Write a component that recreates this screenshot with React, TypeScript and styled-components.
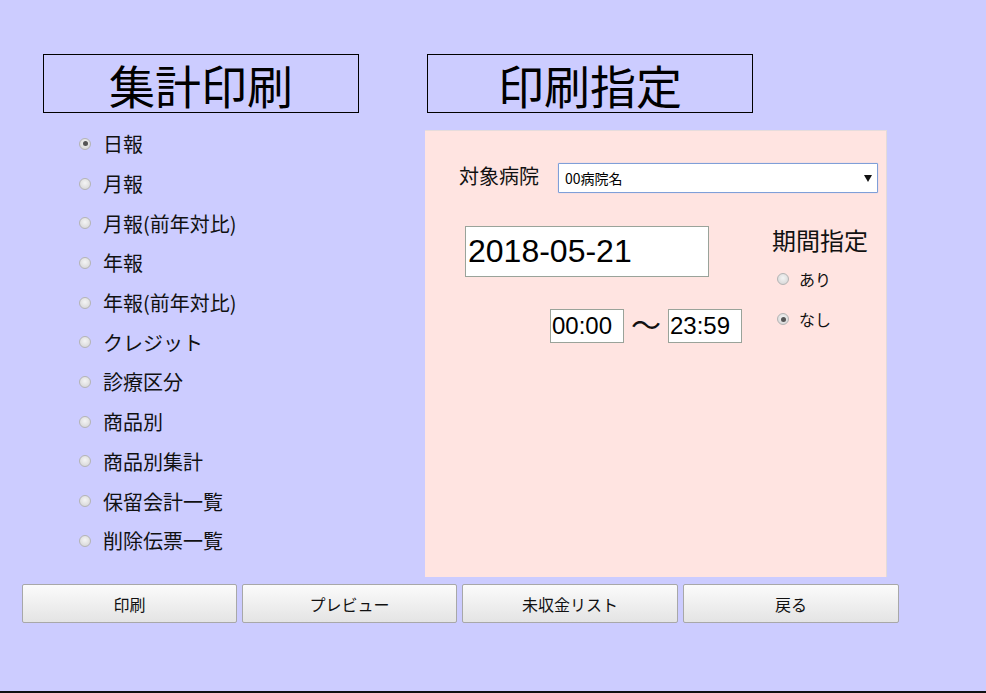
import React, { useState } from "react";
import styled, { createGlobalStyle } from "styled-components";

const GlobalStyle = createGlobalStyle`
  html, body { margin: 0; padding: 0; }
  body {
    background: #ccccff;
    font-family: "Noto Sans CJK JP", "Noto Sans", sans-serif;
    color: #111;
  }
  * { box-sizing: border-box; }
`;

const Page = styled.div`
  width: 986px;
  height: 693px;
  display: flex;
  flex-direction: column;
  overflow: hidden;
`;

const Main = styled.div`
  flex: 1;
  padding: 54px 0 0 22px;
  display: flex;
  flex-direction: column;
`;

const Columns = styled.div`
  display: flex;
  align-items: flex-start;
`;

const LeftCol = styled.div`
  margin-left: 21px;
  width: 316px;
  display: flex;
  flex-direction: column;
`;

const RightCol = styled.div`
  margin-left: 66px;
  width: 462px;
  display: flex;
  flex-direction: column;
`;

const TitleBox = styled.div<{ $w: number; $ml?: number }>`
  width: ${(p) => p.$w}px;
  height: 59px;
  margin-left: ${(p) => p.$ml ?? 0}px;
  border: 1px solid #000;
  display: flex;
  align-items: center;
  justify-content: center;
  font-size: 46px;
  line-height: 1;
  color: #000;
`;

const RadioList = styled.div`
  margin-top: 11px;
  margin-left: 36px;
  display: flex;
  flex-direction: column;
`;

const RadioRow = styled.label<{ $h?: number; $fs?: number; $gap?: number }>`
  height: ${(p) => p.$h ?? 39.7}px;
  display: flex;
  align-items: center;
  gap: ${(p) => p.$gap ?? 12}px;
  font-size: ${(p) => p.$fs ?? 20}px;
  color: #111;
  cursor: pointer;
`;

const Radio = styled.input.attrs({ type: "radio" })`
  appearance: none;
  -webkit-appearance: none;
  margin: 0;
  width: 12px;
  height: 12px;
  border-radius: 50%;
  border: 1px solid #b4b4b4;
  background: radial-gradient(circle at 50% 40%, #f4f4f4 0%, #dcdcdc 70%, #c8c8c8 100%);
  flex: none;
  position: relative;
  &:checked::after {
    content: "";
    position: absolute;
    left: 2.5px;
    top: 2.5px;
    width: 5px;
    height: 5px;
    border-radius: 50%;
    background: #555;
  }
`;

const Panel = styled.div`
  margin-top: 17px;
  height: 447px;
  background: #ffe4e1;
  border-top: 1px solid #e6dcdc;
  border-right: 1px solid #e2dada;
  display: flex;
  flex-direction: column;
`;

const HospitalRow = styled.div`
  margin-top: 32px;
  padding-left: 34px;
  display: flex;
  align-items: center;
  gap: 19px;
`;

const FieldLabel = styled.span`
  font-size: 20px;
  line-height: 1;
  color: #111;
  margin-bottom: 4px;
`;

const SelectWrap = styled.div`
  position: relative;
  width: 320px;
  height: 30px;
`;

const Select = styled.select`
  appearance: none;
  -webkit-appearance: none;
  width: 100%;
  height: 100%;
  border: 1px solid #7f9fd8;
  box-shadow: 0 0 1px #9ab3e6;
  border-radius: 1px;
  background: #fff;
  font-family: "Noto Sans CJK JP", sans-serif;
  font-size: 14px;
  padding: 0 0 0 6px;
  color: #000;
  outline: none;
`;

const Arrow = styled.svg`
  position: absolute;
  right: 6px;
  top: 12px;
  pointer-events: none;
`;

const DateArea = styled.div`
  margin-top: 33px;
  display: flex;
  align-items: flex-start;
`;

const DateCol = styled.div`
  margin-left: 40px;
  width: 277px;
  display: flex;
  flex-direction: column;
`;

const DateInput = styled.input`
  width: 244px;
  height: 51px;
  border: 1px solid #9aa39a;
  background: #fff;
  font-family: "Liberation Sans", Arial, sans-serif;
  font-size: 32px;
  padding: 0 0 0 2px;
  color: #000;
  outline: none;
`;

const TimeRow = styled.div`
  margin-top: 31px;
  display: flex;
  align-items: center;
  justify-content: flex-end;
`;

const TimeInput = styled.input`
  width: 74px;
  height: 34px;
  border: 1px solid #9aa39a;
  background: #fff;
  font-family: "Liberation Sans", Arial, sans-serif;
  font-size: 24px;
  padding: 0 0 0 1px;
  color: #000;
  outline: none;
`;

const Tilde = styled.span`
  width: 44px;
  text-align: center;
  font-size: 30px;
  line-height: 1;
  color: #111;
  margin-bottom: 6px;
`;

const PeriodCol = styled.div`
  margin-left: 30px;
  display: flex;
  flex-direction: column;
`;

const PeriodTitle = styled.div`
  font-size: 24px;
  line-height: 28px;
  color: #111;
`;

const PeriodList = styled.div`
  margin-top: 5px;
  padding-left: 5px;
  display: flex;
  flex-direction: column;
`;

const ButtonRow = styled.div`
  margin-top: 7px;
  display: flex;
  gap: 5px;
`;

const Button = styled.button<{ $w?: number }>`
  width: ${(p) => p.$w ?? 215}px;
  height: 39px;
  border: 1px solid #a8a8a8;
  border-radius: 2px;
  background: linear-gradient(#fbfbfb, #e4e4e4);
  font-family: "Noto Sans CJK JP", sans-serif;
  font-size: 16px;
  color: #111;
  padding: 0;
  cursor: pointer;
`;

const BottomLine = styled.div`
  height: 2px;
  background: #111;
`;

const reports = [
  "日報",
  "月報",
  "月報(前年対比)",
  "年報",
  "年報(前年対比)",
  "クレジット",
  "診療区分",
  "商品別",
  "商品別集計",
  "保留会計一覧",
  "削除伝票一覧",
];

export default function App() {
  const [report, setReport] = useState("日報");
  const [period, setPeriod] = useState("なし");
  return (
    <Page>
      <GlobalStyle />
      <Main>
        <Columns>
          <LeftCol>
            <TitleBox $w={316}>集計印刷</TitleBox>
            <RadioList>
              {reports.map((r) => (
                <RadioRow key={r}>
                  <Radio
                    name="report"
                    checked={report === r}
                    onChange={() => setReport(r)}
                  />
                  {r}
                </RadioRow>
              ))}
            </RadioList>
          </LeftCol>
          <RightCol>
            <TitleBox $w={326} $ml={2}>
              印刷指定
            </TitleBox>
            <Panel>
              <HospitalRow>
                <FieldLabel>対象病院</FieldLabel>
                <SelectWrap>
                  <Select defaultValue="00">
                    <option value="00">00病院名</option>
                  </Select>
                  <Arrow width="8" height="7" viewBox="0 0 8 7">
                    <path d="M0 0 H8 L4 7 Z" fill="#111" />
                  </Arrow>
                </SelectWrap>
              </HospitalRow>
              <DateArea>
                <DateCol>
                  <DateInput defaultValue="2018-05-21" />
                  <TimeRow>
                    <TimeInput defaultValue="00:00" />
                    <Tilde>〜</Tilde>
                    <TimeInput defaultValue="23:59" />
                  </TimeRow>
                </DateCol>
                <PeriodCol>
                  <PeriodTitle>期間指定</PeriodTitle>
                  <PeriodList>
                    {["あり", "なし"].map((p) => (
                      <RadioRow key={p} $fs={16} $h={40} $gap={10}>
                        <Radio
                          name="period"
                          checked={period === p}
                          onChange={() => setPeriod(p)}
                        />
                        {p}
                      </RadioRow>
                    ))}
                  </PeriodList>
                </PeriodCol>
              </DateArea>
            </Panel>
          </RightCol>
        </Columns>
        <ButtonRow>
          <Button>印刷</Button>
          <Button>プレビュー</Button>
          <Button $w={216}>未収金リスト</Button>
          <Button $w={216}>戻る</Button>
        </ButtonRow>
      </Main>
      <BottomLine />
    </Page>
  );
}
